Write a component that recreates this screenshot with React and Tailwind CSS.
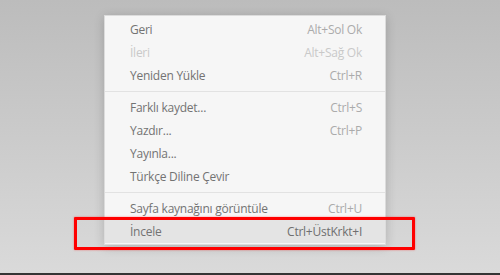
const groups = [
  [
    { label: 'Geri', key: 'Alt+Sol Ok' },
    { label: 'İleri', key: 'Alt+Sağ Ok', disabled: true },
    { label: 'Yeniden Yükle', key: 'Ctrl+R' },
  ],
  [
    { label: 'Farklı kaydet...', key: 'Ctrl+S' },
    { label: 'Yazdır...', key: 'Ctrl+P' },
    { label: 'Yayınla...' },
    { label: 'Türkçe Diline Çevir' },
  ],
  [
    { label: 'Sayfa kaynağını görüntüle', key: 'Ctrl+U' },
    { label: 'İncele', key: 'Ctrl+ÜstKrkt+I', active: true },
  ],
];

function MenuItem({ label, shortcut, disabled, active }) {
  return (
    <div
      className={
        'flex h-[23px] items-center justify-between pl-[25px] pr-[23px] ' +
        (active ? 'bg-[#e4e4e4]' : '')
      }
    >
      <span className={disabled ? 'text-[#c9c9c9]' : 'text-[#737373]'}>{label}</span>
      {shortcut && (
        <span className={disabled ? 'text-[#c9c9c9]' : active ? 'text-[#6f6f6f]' : 'text-[#ababab]'}>
          {shortcut}
        </span>
      )}
    </div>
  );
}

export default function App() {
  return (
    <div
      className="relative h-[275px] w-[500px] overflow-hidden bg-gradient-to-b from-[#bcbcbc] to-[#dadada]"
      style={{ fontFamily: '"Open Sans", "Noto Sans", sans-serif' }}
    >
      <div className="flex h-[273px] flex-col">
        <div className="ml-[104px] mt-[15px] w-[282px] border border-[#dcdcdc] bg-[#f6f6f6] pt-[2px] pb-[1px] text-[12px] tracking-[-0.25px] shadow-[0_2px_10px_rgba(0,0,0,0.18)]">
          {groups.map((g, gi) => (
            <div key={gi}>
              {gi > 0 && <div className="my-[4px] h-px bg-[#e2e2e2]" />}
              {g.map((it) => (
                <MenuItem
                  key={it.label}
                  label={it.label}
                  shortcut={it.key}
                  disabled={it.disabled}
                  active={it.active}
                />
              ))}
            </div>
          ))}
        </div>
      </div>
      <div className="h-[2px] bg-[#343434]" />
      <div className="absolute left-[74px] top-[217px] h-[33px] w-[341px] rounded-[1px] border-[3px] border-[#ff0000] shadow-[0_0_2px_rgba(255,0,0,0.5)]" />
    </div>
  );
}
